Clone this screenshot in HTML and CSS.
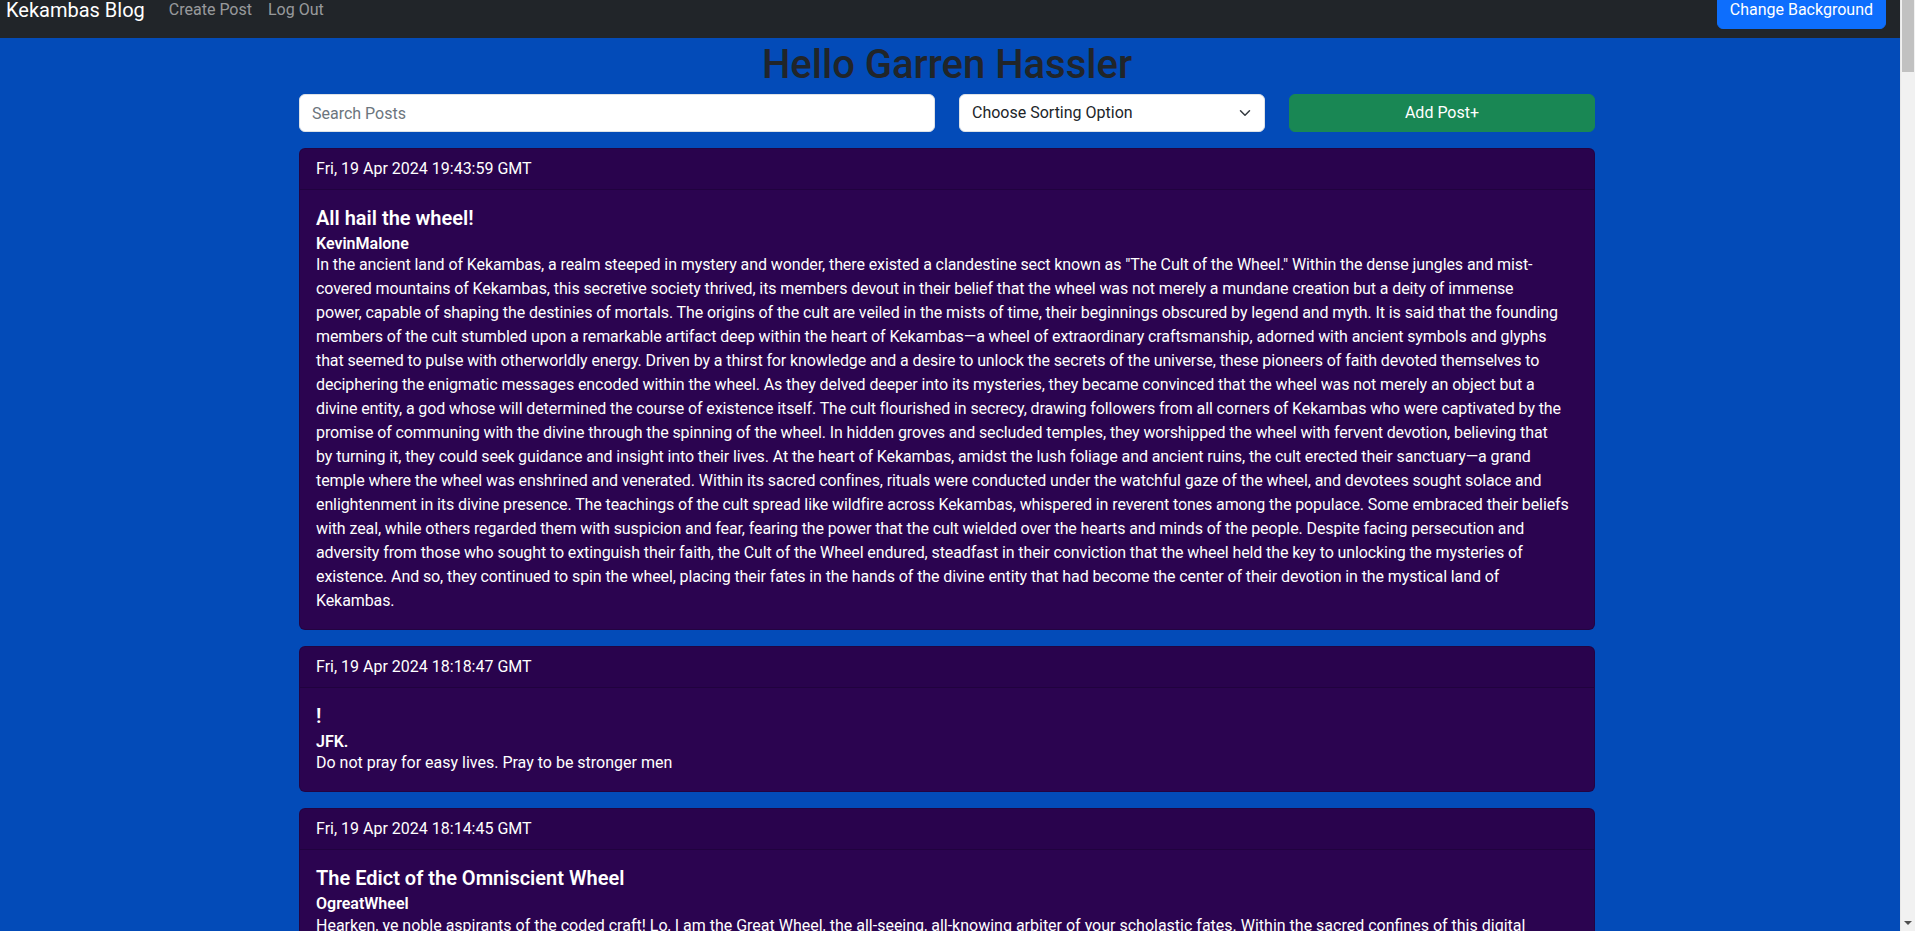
FILE: index.html
```html
<!DOCTYPE html>
<html lang="en">
<head>
<meta charset="utf-8">
<title>Kekambas Blog</title>
<link rel="stylesheet" href="styles.css">
</head>
<body>
<nav class="topbar">
  <div class="topbar-inner">
    <a class="brand" href="#">Kekambas Blog</a>
    <ul class="nav-links">
      <li><a class="nav-link" href="#">Create Post</a></li>
      <li><a class="nav-link" href="#">Log Out</a></li>
    </ul>
    <button class="btn btn-primary" type="button">Change Background</button>
  </div>
</nav>
<div class="page">
<main class="container">
  <h1 class="greeting">Hello Garren Hassler</h1>
  <div class="toolbar">
    <input class="field" type="text" placeholder="Search Posts">
    <div class="select-wrap">
      <select class="field select">
        <option>Choose Sorting Option</option>
        <option>Newest First</option>
        <option>Oldest First</option>
      </select>
      <svg class="chevron" viewBox="0 0 16 16" width="16" height="12" aria-hidden="true"><path fill="none" stroke="#343a40" stroke-linecap="round" stroke-linejoin="round" stroke-width="2" d="m2 5 6 6 6-6"/></svg>
    </div>
    <button class="btn btn-success" type="button">Add Post+</button>
  </div>

  <article class="card">
    <div class="card-header">Fri, 19 Apr 2024 19:43:59 GMT</div>
    <div class="card-body">
      <h5 class="card-title">All hail the wheel!</h5>
      <h6 class="card-subtitle">KevinMalone</h6>
      <p class="card-text lines">In the ancient land of Kekambas, a realm steeped in mystery and wonder, there existed a clandestine sect known as "The Cult of the Wheel." Within the dense jungles and mist-<br>covered mountains of Kekambas, this secretive society thrived, its members devout in their belief that the wheel was not merely a mundane creation but a deity of immense<br>power, capable of shaping the destinies of mortals. The origins of the cult are veiled in the mists of time, their beginnings obscured by legend and myth. It is said that the founding<br>members of the cult stumbled upon a remarkable artifact deep within the heart of Kekambas—a wheel of extraordinary craftsmanship, adorned with ancient symbols and glyphs<br>that seemed to pulse with otherworldly energy. Driven by a thirst for knowledge and a desire to unlock the secrets of the universe, these pioneers of faith devoted themselves to<br>deciphering the enigmatic messages encoded within the wheel. As they delved deeper into its mysteries, they became convinced that the wheel was not merely an object but a<br>divine entity, a god whose will determined the course of existence itself. The cult flourished in secrecy, drawing followers from all corners of Kekambas who were captivated by the<br>promise of communing with the divine through the spinning of the wheel. In hidden groves and secluded temples, they worshipped the wheel with fervent devotion, believing that<br>by turning it, they could seek guidance and insight into their lives. At the heart of Kekambas, amidst the lush foliage and ancient ruins, the cult erected their sanctuary—a grand<br>temple where the wheel was enshrined and venerated. Within its sacred confines, rituals were conducted under the watchful gaze of the wheel, and devotees sought solace and<br>enlightenment in its divine presence. The teachings of the cult spread like wildfire across Kekambas, whispered in reverent tones among the populace. Some embraced their beliefs<br>with zeal, while others regarded them with suspicion and fear, fearing the power that the cult wielded over the hearts and minds of the people. Despite facing persecution and<br>adversity from those who sought to extinguish their faith, the Cult of the Wheel endured, steadfast in their conviction that the wheel held the key to unlocking the mysteries of<br>existence. And so, they continued to spin the wheel, placing their fates in the hands of the divine entity that had become the center of their devotion in the mystical land of<br>Kekambas.</p>
    </div>
  </article>

  <article class="card">
    <div class="card-header">Fri, 19 Apr 2024 18:18:47 GMT</div>
    <div class="card-body">
      <h5 class="card-title">!</h5>
      <h6 class="card-subtitle">JFK.</h6>
      <p class="card-text">Do not pray for easy lives. Pray to be stronger men</p>
    </div>
  </article>

  <article class="card">
    <div class="card-header">Fri, 19 Apr 2024 18:14:45 GMT</div>
    <div class="card-body">
      <h5 class="card-title">The Edict of the Omniscient Wheel</h5>
      <h6 class="card-subtitle">OgreatWheel</h6>
      <p class="card-text">Hearken, ye noble aspirants of the coded craft! Lo, I am the Great Wheel, the all-seeing, all-knowing arbiter of your scholastic fates. Within the sacred confines of this digital<br>realm, I have watched your toils and your triumphs, your errors and your endeavors. Know that every line of code ye write is witnessed, every bug ye vanquish is recorded, and every function ye compose is weighed upon the scales of my eternal judgement. Turn ye now to your labors with diligence and zeal, for the wheel shall spin, and when it stops, it shall choose among you the one who must stand before the assembly and speak. Fear not the spinning, but embrace it, for in its turning lies the path to mastery.</p>
    </div>
  </article>
</main>
</div>
<div class="scrollbar" aria-hidden="true">
  <div class="scroll-thumb"></div>
  <svg class="scroll-arrow" viewBox="0 0 8 4" width="8" height="4"><path d="M0 0h8L4 4z" fill="#505050"/></svg>
</div>
</body>
</html>
```

FILE: styles.css
```css
* {
  box-sizing: border-box;
}

html, body {
  margin: 0;
}

body {
  background: #034bb8;
  color: #212529;
  font-family: Roboto, "Liberation Sans", sans-serif;
  font-size: 16px;
  line-height: 1.5;
  padding-right: 15px;
}

.topbar {
  background: #212529;
  height: 38px;
  display: flex;
  align-items: flex-start;
}

.topbar-inner {
  flex: 1;
  display: flex;
  align-items: center;
  margin-top: -10px;
  padding: 0 14px 0 6px;
}

.brand {
  color: #fff;
  text-decoration: none;
  font-size: 20px;
  line-height: 30px;
  padding: 5px 0;
  margin-right: 16px;
}

.nav-links {
  display: flex;
  list-style: none;
  margin: 0;
  padding: 0;
  flex: 1;
}

.nav-link {
  display: block;
  padding: 8px 8px;
  color: rgba(255, 255, 255, 0.55);
  text-decoration: none;
}

.btn {
  font: inherit;
  border: 1px solid transparent;
  border-radius: 6px;
  padding: 6px 12px;
  line-height: 24px;
  color: #fff;
  cursor: pointer;
}

.btn-primary {
  background: #0d6efd;
  border-color: #0d6efd;
}

.btn-success {
  background: #198754;
  border-color: #198754;
  width: 100%;
}

.page {
  padding-right: 6px;
}

.container {
  max-width: 1320px;
  margin: 0 auto;
  padding: 0 12px;
}

.greeting {
  margin: 0 0 5px;
  padding-top: 3px;
  text-align: center;
  font-size: 40px;
  font-weight: 500;
  line-height: 1.2;
  color: #212529;
}

.toolbar {
  display: grid;
  grid-template-columns: calc(50% - 12px) 1fr 1fr;
  gap: 24px;
  margin-bottom: 16px;
}

.field {
  display: block;
  width: 100%;
  height: 38px;
  padding: 6px 12px;
  font: inherit;
  line-height: 24px;
  color: #212529;
  background: #fff;
  border: 1px solid #dee2e6;
  border-radius: 6px;
}

.field::placeholder {
  color: #6c757d;
}

.select-wrap {
  position: relative;
}

.select {
  appearance: none;
  -webkit-appearance: none;
  padding-right: 36px;
}

.chevron {
  position: absolute;
  right: 12px;
  top: 13px;
  pointer-events: none;
}

.card {
  background: #2b0450;
  color: #fff;
  border: 1px solid rgba(0, 0, 0, 0.175);
  border-radius: 6px;
  margin-bottom: 16px;
  overflow: hidden;
}

.card-header {
  padding: 8px 16px;
  background: rgba(0, 0, 0, 0.03);
  border-bottom: 1px solid rgba(0, 0, 0, 0.175);
}

.card-body {
  padding: 16px;
}

.card-title {
  margin: 0 0 8px;
  font-size: 20px;
  font-weight: 600;
  line-height: 1.2;
}

.card-subtitle {
  margin: -4px 0 0;
  font-size: 16px;
  font-weight: 600;
  line-height: 1.2;
}

.card-text {
  margin: 0;
}

.card-text.lines {
  white-space: nowrap;
  letter-spacing: -0.1px;
}

.scrollbar {
  position: fixed;
  top: 0;
  right: 0;
  bottom: 0;
  width: 15px;
  background: #f1f1f1;
  border-left: 1px solid #e8e8e8;
}

.scroll-thumb {
  margin: 0 1px;
  height: 72px;
  background: #c1c1c1;
}

.scroll-arrow {
  position: absolute;
  left: 3px;
  bottom: 6px;
}
```
